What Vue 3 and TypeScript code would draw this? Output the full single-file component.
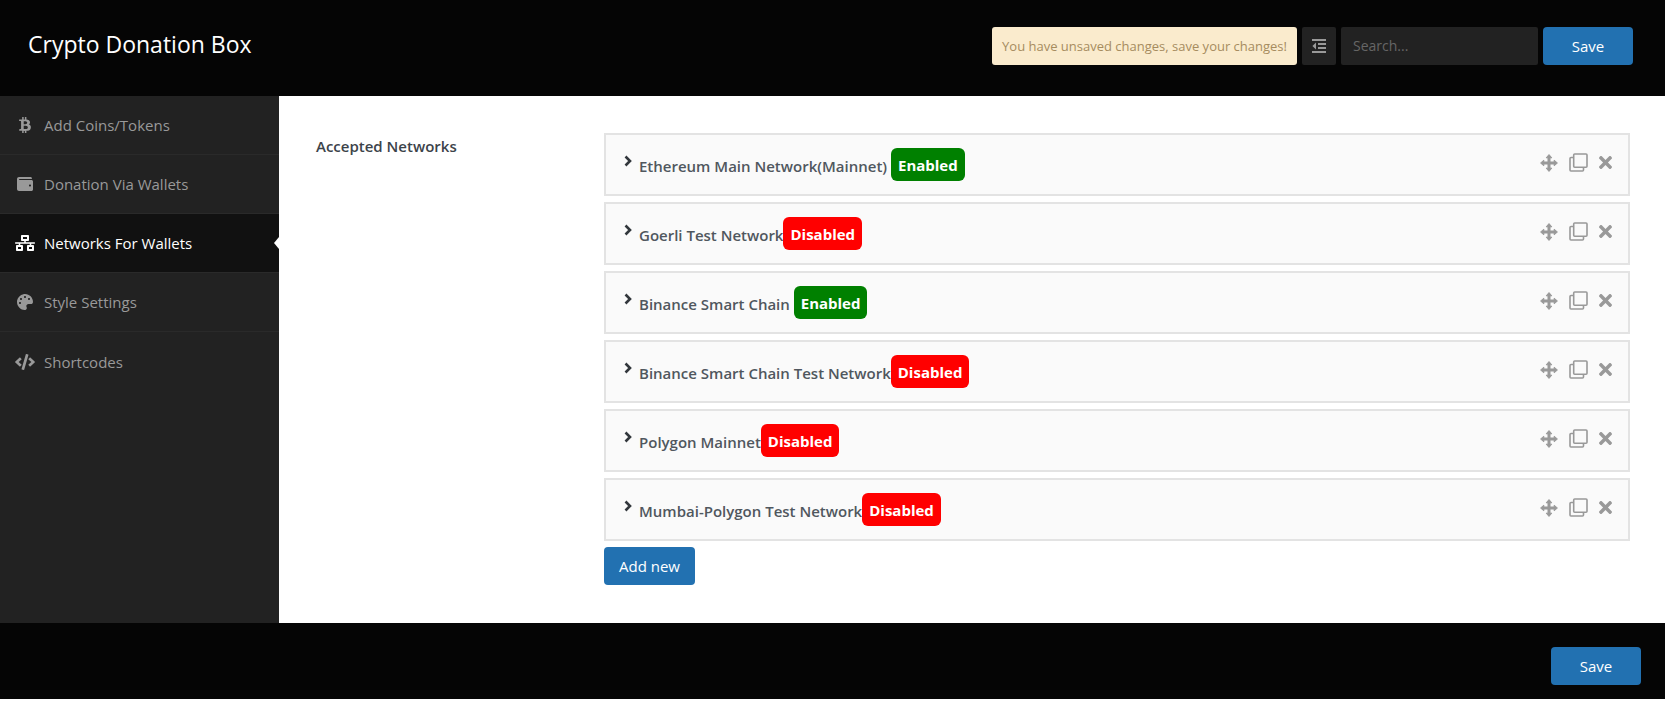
<script setup lang="ts">
import { ref } from 'vue'

interface Section {
  label: string
  width: number
  path: string
}

interface Network {
  name: string
  enabled: boolean
}

const sections: Section[] = [
  {
    label: 'Add Coins/Tokens',
    width: 384,
    path: 'M310.204 242.638c27.73-14.18 45.377-39.39 41.28-81.3-5.358-57.351-52.458-76.573-114.85-81.929V0h-48.528v77.203c-12.605 0-25.525.315-38.444.63V0h-48.53v79.409c-17.842.539-38.622.276-97.37 0v51.678c38.314-.678 58.417-3.14 63.023 21.427v217.429c-2.925 19.492-18.524 16.685-53.255 16.071L3.765 443.68c88.481 0 97.37.315 97.37.315V512h48.53v-67.06c13.234.315 26.154.315 38.444.315V512h48.528v-68.005c81.299-4.412 135.647-24.894 142.895-101.467 5.671-61.446-23.32-88.862-69.326-99.89zM150.608 134.553c27.415 0 113.126-8.507 113.126 48.528 0 54.515-85.71 48.212-113.126 48.212v-96.74zm0 251.776V279.821c32.772 0 133.127-9.138 133.127 53.255-.001 60.186-100.355 53.253-133.127 53.253z',
  },
  {
    label: 'Donation Via Wallets',
    width: 512,
    path: 'M461.2 128H80c-8.84 0-16-7.16-16-16s7.16-16 16-16h384c8.84 0 16-7.16 16-16 0-26.51-21.49-48-48-48H64C28.65 32 0 60.65 0 96v320c0 35.35 28.65 64 64 64h397.2c28.02 0 50.8-21.53 50.8-48V176c0-26.47-22.78-48-50.8-48zM416 336c-17.67 0-32-14.33-32-32s14.33-32 32-32 32 14.33 32 32-14.33 32-32 32z',
  },
  {
    label: 'Networks For Wallets',
    width: 640,
    path: 'M640 264v-16c0-8.84-7.16-16-16-16H344v-40h72c17.67 0 32-14.33 32-32V32c0-17.67-14.33-32-32-32H224c-17.67 0-32 14.33-32 32v128c0 17.67 14.33 32 32 32h72v40H16c-8.84 0-16 7.16-16 16v16c0 8.84 7.16 16 16 16h104v40H64c-17.67 0-32 14.33-32 32v128c0 17.67 14.33 32 32 32h160c17.67 0 32-14.33 32-32V352c0-17.67-14.33-32-32-32h-56v-40h304v40h-56c-17.67 0-32 14.33-32 32v128c0 17.67 14.33 32 32 32h160c17.67 0 32-14.33 32-32V352c0-17.67-14.33-32-32-32h-56v-40h104c8.84 0 16-7.16 16-16zM256 128V64h128v64H256zm-64 320H96v-64h96v64zm352 0h-96v-64h96v64z',
  },
  {
    label: 'Style Settings',
    width: 512,
    path: 'M204.3 5C104.9 24.4 24.8 104.3 5.2 203.4c-37 187 131.7 326.4 258.8 306.7 41.2-6.4 61.4-54.6 42.5-91.7-23.1-45.4 9.9-98.4 60.9-98.4h79.7c35.8 0 64.8-29.6 64.9-65.3C511.5 97.1 368.1-26.9 204.3 5zM96 320c-17.7 0-32-14.3-32-32s14.3-32 32-32 32 14.3 32 32-14.3 32-32 32zm32-128c-17.7 0-32-14.3-32-32s14.3-32 32-32 32 14.3 32 32-14.3 32-32 32zm128-64c-17.7 0-32-14.3-32-32s14.3-32 32-32 32 14.3 32 32-14.3 32-32 32zm128 64c-17.7 0-32-14.3-32-32s14.3-32 32-32 32 14.3 32 32-14.3 32-32 32z',
  },
  {
    label: 'Shortcodes',
    width: 640,
    path: 'M278.9 511.5l-61-17.7c-6.4-1.8-10-8.5-8.2-14.9L346.2 8.7c1.8-6.4 8.5-10 14.9-8.2l61 17.7c6.4 1.8 10 8.5 8.2 14.9L293.8 503.3c-1.9 6.4-8.5 10.1-14.9 8.2zm-114-112.2l43.5-46.4c4.6-4.9 4.3-12.7-.8-17.2L117 256l90.6-79.7c5.1-4.5 5.5-12.3.8-17.2l-43.5-46.4c-4.5-4.8-12.1-5.1-17-.5L3.8 247.2c-5.1 4.7-5.1 12.8 0 17.5l144.1 135.1c4.9 4.6 12.5 4.4 17-.5zm327.2.6l144.1-135.1c5.1-4.7 5.1-12.8 0-17.5L492.1 112.1c-4.8-4.5-12.4-4.3-17 .5L431.6 159c-4.6 4.9-4.3 12.7.8 17.2L523 256l-90.6 79.7c-5.1 4.5-5.5 12.3-.8 17.2l43.5 46.4c4.5 4.9 12.1 5.1 17 .6z',
  },
]

const active = ref(2)
const query = ref('')

const networks = ref<Network[]>([
  { name: 'Ethereum Main Network(Mainnet)', enabled: true },
  { name: 'Goerli Test Network', enabled: false },
  { name: 'Binance Smart Chain', enabled: true },
  { name: 'Binance Smart Chain Test Network', enabled: false },
  { name: 'Polygon Mainnet', enabled: false },
  { name: 'Mumbai-Polygon Test Network', enabled: false },
])

function addNetwork() {
  networks.value.push({ name: 'New Network', enabled: false })
}

function cloneNetwork(index: number) {
  networks.value.splice(index + 1, 0, { ...networks.value[index] })
}

function removeNetwork(index: number) {
  networks.value.splice(index, 1)
}
</script>

<template>
  <div class="options">
    <header class="header">
      <h1 class="title">Crypto Donation Box</h1>
      <div class="tools">
        <p class="notice" role="status">You have unsaved changes, save your changes!</p>
        <button class="expand" type="button" aria-label="Show all options">
          <svg viewBox="0 0 14 14" width="14" height="14" fill="currentColor" aria-hidden="true">
            <path d="M0 0h14v2H0zM6 4h8v2H6zM6 8h8v2H6zM0 12h14v2H0zM4 3.6v6.8L.4 7z" />
          </svg>
        </button>
        <input v-model="query" class="search" type="search" placeholder="Search..." aria-label="Search" />
        <button class="primary save" type="button">Save</button>
      </div>
    </header>

    <div class="body">
      <nav class="nav" aria-label="Sections">
        <a
          v-for="(section, i) in sections"
          :key="section.label"
          href="#"
          class="nav-link"
          :class="{ active: i === active }"
          :aria-current="i === active ? 'page' : undefined"
          @click.prevent="active = i"
        >
          <svg class="nav-icon" :viewBox="`0 0 ${section.width} 512`" fill="currentColor" aria-hidden="true">
            <path :d="section.path" />
          </svg>
          <span>{{ section.label }}</span>
        </a>
      </nav>

      <main class="content">
        <h2 class="field-title">Accepted Networks</h2>
        <div class="field">
          <ul class="cards">
            <li v-for="(network, i) in networks" :key="i" class="card">
              <button class="card-toggle" type="button" aria-expanded="false">
                <svg class="chevron" viewBox="0 0 8 12" aria-hidden="true">
                  <path d="M1.5 1.5 6 6l-4.500 4.500" fill="none" stroke="currentColor" stroke-width="2.600" />
                </svg>
                <span class="name">{{ network.name + (network.enabled ? ' ' : '') }}</span>
                <span class="badge" :class="network.enabled ? 'on' : 'off'">{{ network.enabled ? 'Enabled' : 'Disabled' }}</span>
              </button>
              <div class="actions">
                <button class="action" type="button" aria-label="Move">
                  <svg viewBox="0 0 18 18" width="18" height="18" fill="currentColor" stroke="currentColor" stroke-width="1" stroke-linejoin="round" aria-hidden="true">
                    <path d="M9 .6l2.800 3.200H10v4.200h4.200V6.200L17.400 9l-3.200 2.800V10H10v4.200h1.800L9 17.400l-2.800-3.200H8V10H3.800v1.800L.6 9l3.200-2.800V8H8V3.800H6.200z" />
                  </svg>
                </button>
                <button class="action" type="button" aria-label="Clone" @click="cloneNetwork(i)">
                  <svg viewBox="0 0 19 19" width="19" height="19" fill="none" stroke="currentColor" aria-hidden="true">
                    <rect x="4.700" y="1" width="13.300" height="13.300" rx="1" stroke-width="1.600" />
                    <path d="M4.500 4.500H2Q1 4.500 1 5.500v11.500Q1 18 2 18H13.500q1 0 1-1v-2.500" stroke-width="1.600" />
                  </svg>
                </button>
                <button class="action" type="button" aria-label="Remove" @click="removeNetwork(i)">
                  <svg viewBox="0 80 352 352" width="13" height="13" fill="currentColor" aria-hidden="true">
                    <path d="M242.72 256l100.07-100.07c12.28-12.28 12.28-32.19 0-44.48l-22.24-22.24c-12.28-12.28-32.19-12.28-44.48 0L176 189.28 75.93 89.21c-12.28-12.28-32.19-12.28-44.48 0L9.21 111.45c-12.28 12.28-12.28 32.19 0 44.48L109.28 256 9.21 356.07c-12.28 12.28-12.28 32.19 0 44.48l22.24 22.24c12.28 12.28 32.2 12.28 44.48 0L176 322.72l100.07 100.07c12.28 12.28 32.2 12.28 44.48 0l22.24-22.24c12.28-12.28 12.28-32.19 0-44.48L242.72 256z" />
                  </svg>
                </button>
              </div>
            </li>
          </ul>
          <button class="primary" type="button" @click="addNetwork">Add new</button>
        </div>
      </main>
    </div>

    <footer class="footer">
      <button class="primary save" type="button">Save</button>
    </footer>
  </div>
</template>

<style>
body {
  background: #fff;
}
</style>

<style scoped>
.options,
.options * {
  box-sizing: border-box;
}

.options {
  font-family: 'Open Sans', 'Noto Sans', sans-serif;
  font-size: 15px;
  line-height: 20px;
  color: #3c434a;
}

button,
input {
  margin: 0;
  border: 0;
  font: inherit;
}

button {
  padding: 0;
  background: none;
  color: inherit;
  cursor: pointer;
}

.header {
  display: flex;
  justify-content: space-between;
  align-items: flex-start;
  padding: 27px 32px 31px 28px;
  background: #050505;
}

.title {
  margin: 0;
  font-size: 23px;
  font-weight: 400;
  line-height: 34px;
  color: #fff;
}

.tools {
  display: flex;
  gap: 5px;
  height: 38px;
}

.notice {
  margin: 0;
  padding: 0 10px;
  border-radius: 3px;
  background: #faebcd;
  color: #a68c5f;
  font-size: 13px;
  line-height: 38px;
}

.expand {
  display: flex;
  align-items: center;
  justify-content: center;
  width: 34px;
  border-radius: 2px;
  background: #222;
  color: #999;
}

.search {
  width: 197px;
  padding: 0 12px;
  border-radius: 2px;
  background: #222;
  color: #ccc;
  font-size: 14px;
}

.search::placeholder {
  color: #666;
}

.primary {
  height: 38px;
  padding: 0 15px;
  border-radius: 4px;
  background: #2271b1;
  color: #fff;
}

.save {
  width: 90px;
}

.body {
  display: flex;
  min-height: 527px;
}

.nav {
  flex: none;
  width: 279px;
  background: #222;
}

.nav-link {
  position: relative;
  display: flex;
  align-items: center;
  gap: 8px;
  height: 59px;
  padding-left: 14px;
  border-bottom: 1px solid #2a2a2a;
  color: #999;
  text-decoration: none;
}

.nav-link:last-child {
  border-bottom: 0;
}

.nav-link.active {
  background: #111;
  color: #fff;
}

.nav-link.active::after {
  content: '';
  position: absolute;
  top: 50%;
  right: 0;
  margin-top: -6px;
  border: 6px solid transparent;
  border-left: 0;
  border-right: 5px solid #fff;
}

.nav-icon {
  width: 22px;
  height: 16px;
}

.content {
  display: flex;
  flex: 1;
  align-items: flex-start;
  padding: 37px 35px 38px 37px;
}

.field-title {
  flex: none;
  width: 288px;
  margin: 0;
  padding-top: 3px;
  font-size: 15px;
  font-weight: 600;
}

.field {
  flex: 1;
}

.cards {
  display: flex;
  flex-direction: column;
  gap: 6px;
  margin: 0 0 6px;
  padding: 0;
  list-style: none;
}

.card {
  display: flex;
  justify-content: space-between;
  align-items: flex-start;
  padding: 13px 16px 13px 18px;
  border: 2px solid #e3e3e3;
  background: #fafafa;
}

.card-toggle {
  display: flex;
  align-items: center;
  font-weight: 600;
  color: #50575e;
}

.chevron {
  width: 8px;
  height: 12px;
  margin: 0 7px 8px 0;
  color: #32373c;
}

.name {
  padding-top: 2px;
  white-space: pre;
}

.badge {
  padding: 7px 7px 6px;
  border-radius: 6px;
  color: #fff;
  font-weight: 700;
}

.on {
  background: #008000;
}

.off {
  background: #f00;
}

.actions {
  display: flex;
  align-items: center;
  gap: 11px;
  height: 29px;
  color: #999;
}

.action {
  display: flex;
}

.footer {
  display: flex;
  justify-content: flex-end;
  padding: 24px 24px 14px;
  background: #050505;
}
</style>
